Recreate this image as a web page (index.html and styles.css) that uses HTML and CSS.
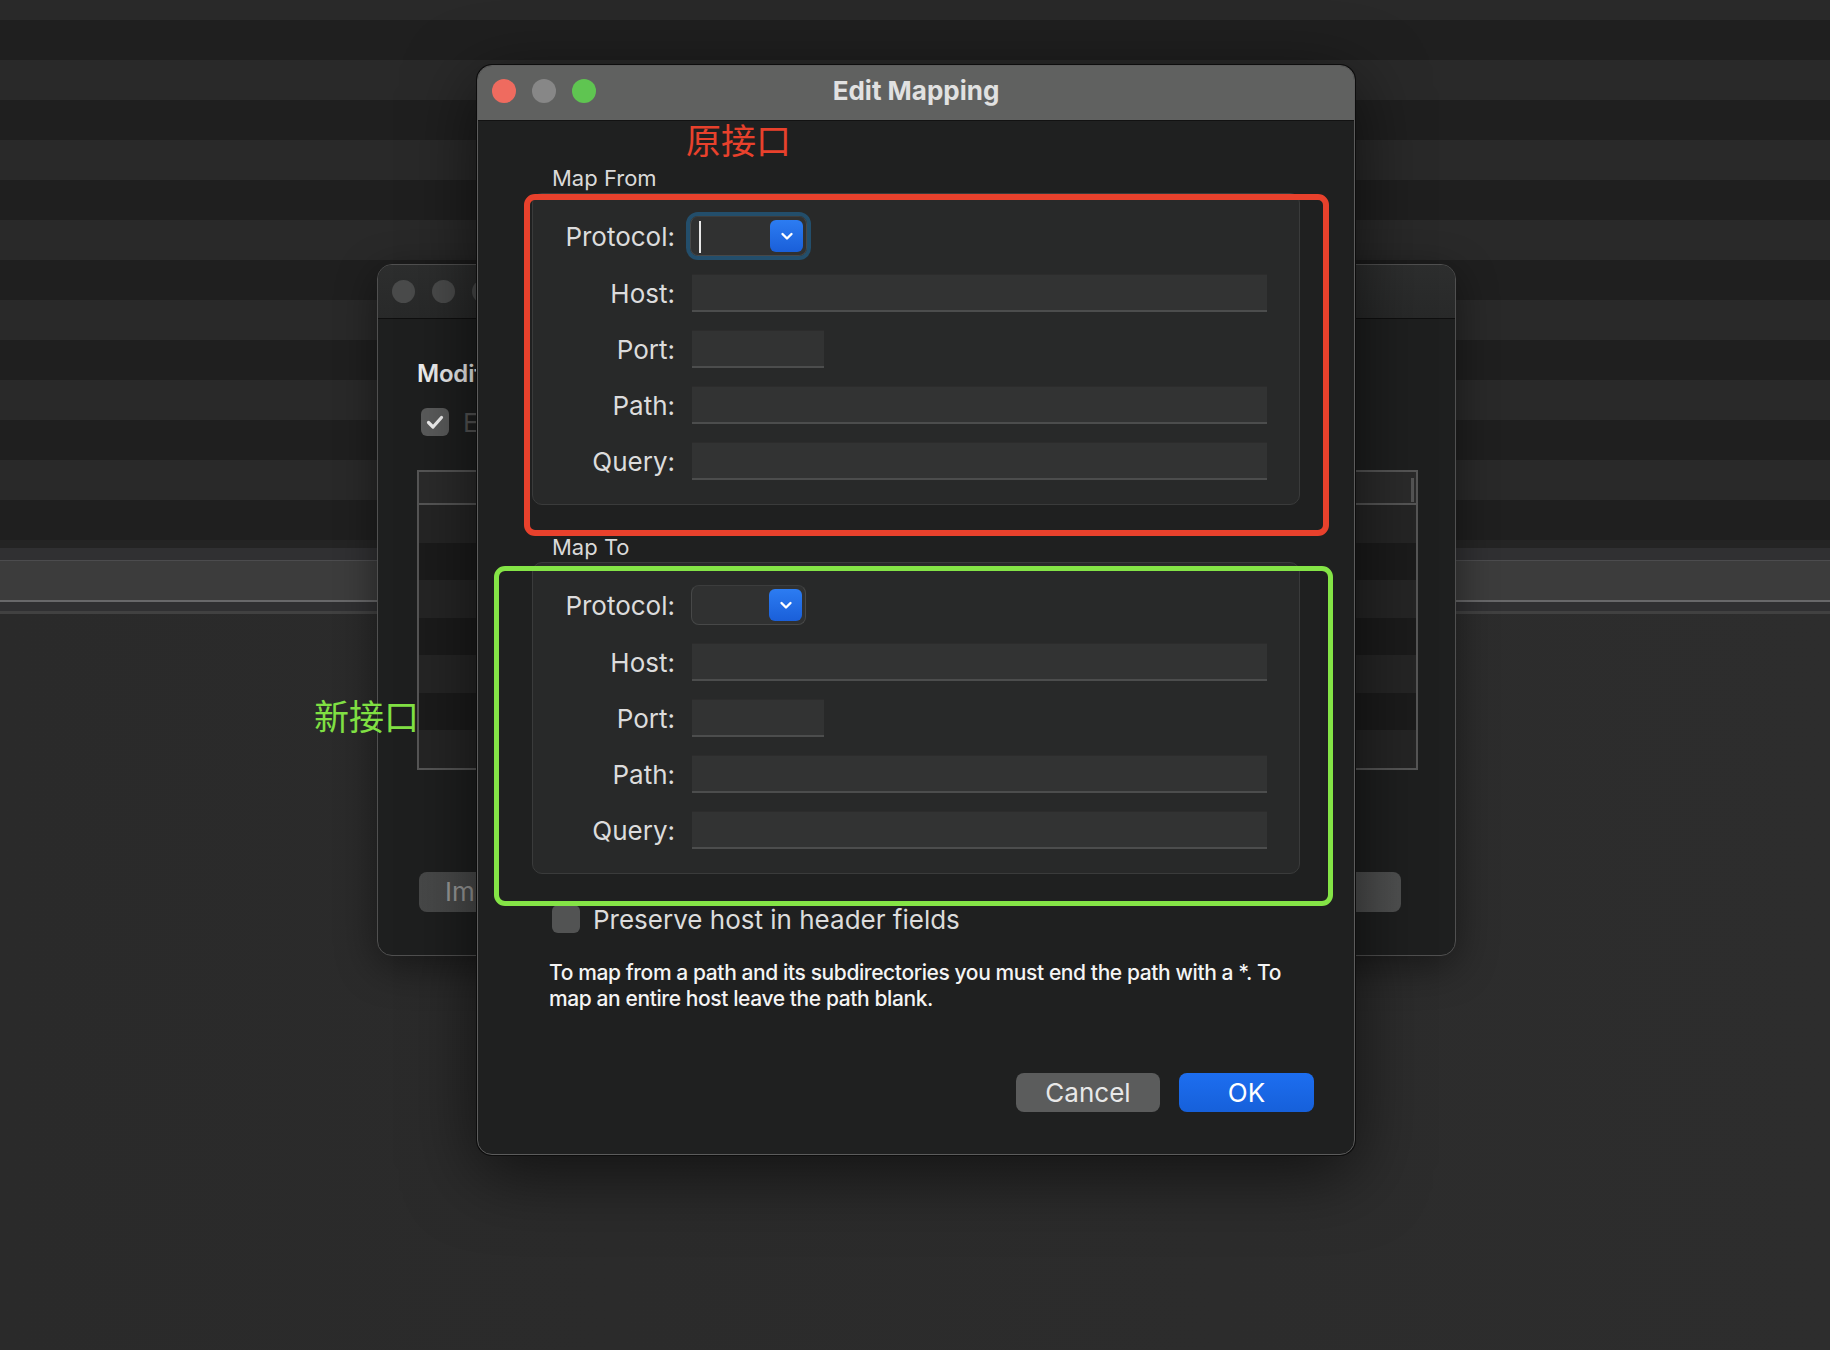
FILE: index.html
```html
<!DOCTYPE html>
<html lang="en">
<head>
<meta charset="utf-8">
<title>Edit Mapping</title>
<link rel="stylesheet" href="styles.css">
</head>
<body>
<div class="desktop">
  <div class="stripes"></div>
  <div class="band"></div>
  <div class="bar-top"></div>
  <div class="bar-main"></div>
  <div class="bar-low"></div>
  <div class="floor"></div>

  <section class="window bgwin">
    <div class="bg-titlebar">
      <span class="light dim"></span><span class="light dim"></span><span class="light dim"></span>
    </div>
    <div class="bg-body">
      <h2 class="bg-heading">Modify</h2>
      <div class="bg-check-row">
        <span class="check on"><svg viewBox="0 0 28 28" width="28" height="28"><path d="M7.5 14.5 L12 19 L20.5 9.5" fill="none" stroke="#f2f2f2" stroke-width="3.2" stroke-linecap="round" stroke-linejoin="round"/></svg></span>
        <span class="bg-check-label">Enable</span>
      </div>
      <div class="bg-table">
        <div class="bg-thead"><span class="thead-grip"></span></div>
        <div class="bg-row"></div><div class="bg-row"></div><div class="bg-row"></div>
        <div class="bg-row"></div><div class="bg-row"></div><div class="bg-row"></div>
        <div class="bg-row"></div>
      </div>
      <div class="bg-buttons">
        <button class="bg-btn">Import</button>
        <button class="bg-btn wide">OK</button>
      </div>
    </div>
  </section>

  <section class="window dialog">
    <div class="titlebar">
      <div class="lights">
        <span class="light red"></span><span class="light gray"></span><span class="light green"></span>
      </div>
      <div class="title">Edit Mapping</div>
      <div></div>
    </div>
    <div class="dlg-body">
      <div class="box-label">Map From</div>
      <div class="group">
        <label class="lbl">Protocol:</label>
        <div class="popup focused"><span class="caret"></span><span class="popup-btn"><svg viewBox="0 0 20 20" width="20" height="20"><path d="M5.5 8 L10 12.5 L14.5 8" fill="none" stroke="#fff" stroke-width="2.4" stroke-linecap="round" stroke-linejoin="round"/></svg></span></div>
        <label class="lbl">Host:</label><div class="field"></div>
        <label class="lbl">Port:</label><div class="field short"></div>
        <label class="lbl">Path:</label><div class="field"></div>
        <label class="lbl">Query:</label><div class="field"></div>
      </div>

      <div class="box-label second">Map To</div>
      <div class="group">
        <label class="lbl">Protocol:</label>
        <div class="popup"><span class="popup-btn"><svg viewBox="0 0 20 20" width="20" height="20"><path d="M5.5 8 L10 12.5 L14.5 8" fill="none" stroke="#fff" stroke-width="2.4" stroke-linecap="round" stroke-linejoin="round"/></svg></span></div>
        <label class="lbl">Host:</label><div class="field"></div>
        <label class="lbl">Port:</label><div class="field short"></div>
        <label class="lbl">Path:</label><div class="field"></div>
        <label class="lbl">Query:</label><div class="field"></div>
      </div>

      <div class="check-row">
        <span class="check"></span>
        <span class="check-label">Preserve host in header fields</span>
      </div>

      <p class="help">To map from a path and its subdirectories you must end the path with a *. To<br>map an entire host leave the path blank.</p>

      <div class="actions">
        <button class="btn cancel">Cancel</button>
        <button class="btn ok">OK</button>
      </div>
    </div>
  </section>

  <div class="note red-box"></div>
  <div class="note green-box"></div>
  <div class="note red-text">原接口</div>
  <div class="note green-text">新接口</div>
</div>
</body>
</html>
```

FILE: styles.css
```css
* { box-sizing: border-box; }
html, body { margin: 0; padding: 0; }
body {
  width: 1830px;
  height: 1350px;
  overflow: hidden;
  background: #2c2c2c;
  font-family: Inter, "Noto Sans", "Liberation Sans", sans-serif;
}
.desktop { position: relative; width: 1830px; height: 1350px; }

.stripes {
  height: 540px;
  background: repeating-linear-gradient(to bottom, #292929 0 20px, #1f1f1f 20px 60px, #292929 60px 80px);
}
.band { height: 8px; background: #242424; }
.bar-top { height: 13px; background: #303032; border-bottom: 1px solid #4c4c4e; }
.bar-main { height: 41px; background: #3c3c3c; border-bottom: 2px solid #68686a; }
.bar-low { height: 12px; background: #303032; border-bottom: 3px solid #414141; }
.floor { height: 736px; background: linear-gradient(90deg, #2a2a2a, #2d2d2d); }

/* ---------- background window ---------- */
.bgwin {
  position: absolute;
  left: 377px; top: 264px;
  width: 1079px; height: 692px;
  border-radius: 15px;
  border: 1px solid #505050;
  background: #1e1f1f;
  overflow: hidden;
  box-shadow: 0 10px 40px rgba(0,0,0,.45);
}
.bg-titlebar {
  height: 54px;
  background: linear-gradient(#2d2e2e, #282929);
  border-bottom: 1px solid #0f0f0f;
  display: flex;
  align-items: center;
  gap: 17px;
  padding-left: 14px;
}
.light { display: block; width: 24px; height: 24px; border-radius: 50%; }
.light.dim { width: 23px; height: 23px; background: #4a4b4b; }
.bg-body { padding: 39px 54px 0 39px; }
.bg-heading {
  margin: 0;
  font-size: 24px;
  line-height: 32px;
  font-weight: 600;
  letter-spacing: -0.2px;
  color: #f0f0f0;
  white-space: nowrap;
}
.bg-check-row { display: flex; align-items: center; gap: 14px; margin: 18px 0 0 4px; height: 28px; }
.check { display: block; width: 28px; height: 28px; border-radius: 6px; background: #525353; }
.check.on { background: #5a5b5b; }
.check svg { display: block; }
.bg-check-label { font-size: 26px; color: #555; white-space: nowrap; }
.bg-table {
  margin-top: 34px;
  width: 1001px;
  border: 2px solid #565656;
}
.bg-thead { height: 33px; background: #2b2b2b; border-bottom: 2px solid #565656; position: relative; }
.thead-grip { position: absolute; right: 2px; top: 6px; width: 3px; height: 24px; background: #555; }
.bg-row { height: 37.5px; background: #252525; }
.bg-row:nth-child(odd) { background: #1b1b1b; }
.bg-buttons { display: flex; justify-content: space-between; margin-top: 102px; padding-left: 2px; }
.bg-btn {
  height: 40px;
  border: 0;
  border-radius: 8px;
  background: linear-gradient(90deg, #474848, #4f5050);
  color: #9a9a9a;
  font: 26px Inter, "Noto Sans", sans-serif;
  padding: 0 26px;
}
.bg-btn.wide { width: 200px; }

/* ---------- dialog ---------- */
.dialog {
  position: absolute;
  left: 477px; top: 65px;
  width: 878px; height: 1090px;
  border-radius: 15px;
  border: 1px solid #5c5c5c;
  background: #1f2020;
  overflow: hidden;
  box-shadow: 0 0 0 1px #0d0d0d, 0 18px 70px rgba(0,0,0,.6);
}
.titlebar {
  height: 55px;
  padding-bottom: 5px;
  background: #606160;
  border-bottom: 1px solid #121212;
  display: grid;
  grid-template-columns: 1fr auto 1fr;
  align-items: center;
}
.lights { display: flex; gap: 16px; padding-left: 14px; }
.light.red { background: #ef6b5f; }
.light.gray { background: #878787; }
.light.green { background: #5fc551; }
.title { font-size: 26px; font-weight: 700; color: #e1e1e1; }

.dlg-body { padding: 45px 54px 0 54px; display: flex; flex-direction: column; }
.box-label { font-size: 22px; line-height: 24px; color: #dadada; margin: 0 0 3px 20px; }
.box-label.second { margin-top: 30px; }
.group {
  background: #282929;
  border: 1px solid #3a3b3b;
  border-radius: 10px;
  padding: 22px 32px 24px 0;
  display: grid;
  grid-template-columns: 142px 1fr;
  grid-template-rows: 40px 38px 38px 38px 38px;
  column-gap: 17px;
  row-gap: 18px;
  align-items: center;
}
.lbl { justify-self: end; font-size: 26px; color: #dcdcdc; white-space: nowrap; }
.field {
  height: 38px;
  background: #323333;
  border-top: 1px solid #2c2c2c;
  border-bottom: 2px solid #4c4d4d;
}
.field.short { width: 132px; }
.popup {
  width: 115px;
  height: 40px;
  margin-left: -1px;
  border-radius: 8px;
  background: #303131;
  border: 1px solid #474848;
  border-top-color: #3c3d3d;
  position: relative;
  display: flex;
  justify-content: flex-end;
  align-items: center;
  padding-right: 3px;
}
.popup.focused { outline: 4px solid #234e6b; outline-offset: 0; width: 117px; margin-left: -2px; }
.caret { position: absolute; left: 8px; top: 4px; width: 2px; height: 32px; background: #e8e8e8; }
.popup-btn {
  width: 33px; height: 32px;
  border-radius: 6px;
  background: linear-gradient(#2c7cf2, #1a5fd9);
  display: flex; align-items: center; justify-content: center;
}
.popup-btn svg { display: block; }

.check-row { display: flex; align-items: center; gap: 13px; margin: 31px 0 0 20px; height: 28px; }
.check-label { font-size: 26px; color: #dcdcdc; white-space: nowrap; }

.help {
  margin: 27px 0 0 17px;
  font-size: 21px;
  line-height: 26px;
  font-weight: 500;
  letter-spacing: -0.4px;
  color: #f4f4f4;
  white-space: nowrap;
}
.actions { display: flex; justify-content: flex-end; gap: 19px; margin: 61px -14px 0 0; }
.btn {
  height: 39px;
  border: 0;
  border-radius: 8px;
  font: 26px Inter, "Noto Sans", sans-serif;
  color: #e8e8e8;
  padding: 0;
}
.btn.cancel { width: 144px; background: #5b5c5c; }
.btn.ok { width: 135px; background: linear-gradient(#1d6ef0, #1660da); color: #fff; }

/* ---------- annotations ---------- */
.note { position: absolute; }
.red-box {
  left: 524px; top: 194px; width: 805px; height: 342px;
  border: 6px solid #e8412c;
  border-radius: 11px;
}
.green-box {
  left: 494px; top: 566px; width: 839px; height: 340px;
  border: 5px solid #84e446;
  border-radius: 11px;
}
.red-text, .green-text {
  font-family: "Noto Sans CJK SC", "Noto Sans", sans-serif;
  font-size: 35px;
  line-height: 42px;
  font-weight: 400;
  white-space: nowrap;
}
.red-text { left: 686px; top: 118px; color: #e8412c; }
.green-text { left: 314px; top: 694px; color: #80e043; }
```
